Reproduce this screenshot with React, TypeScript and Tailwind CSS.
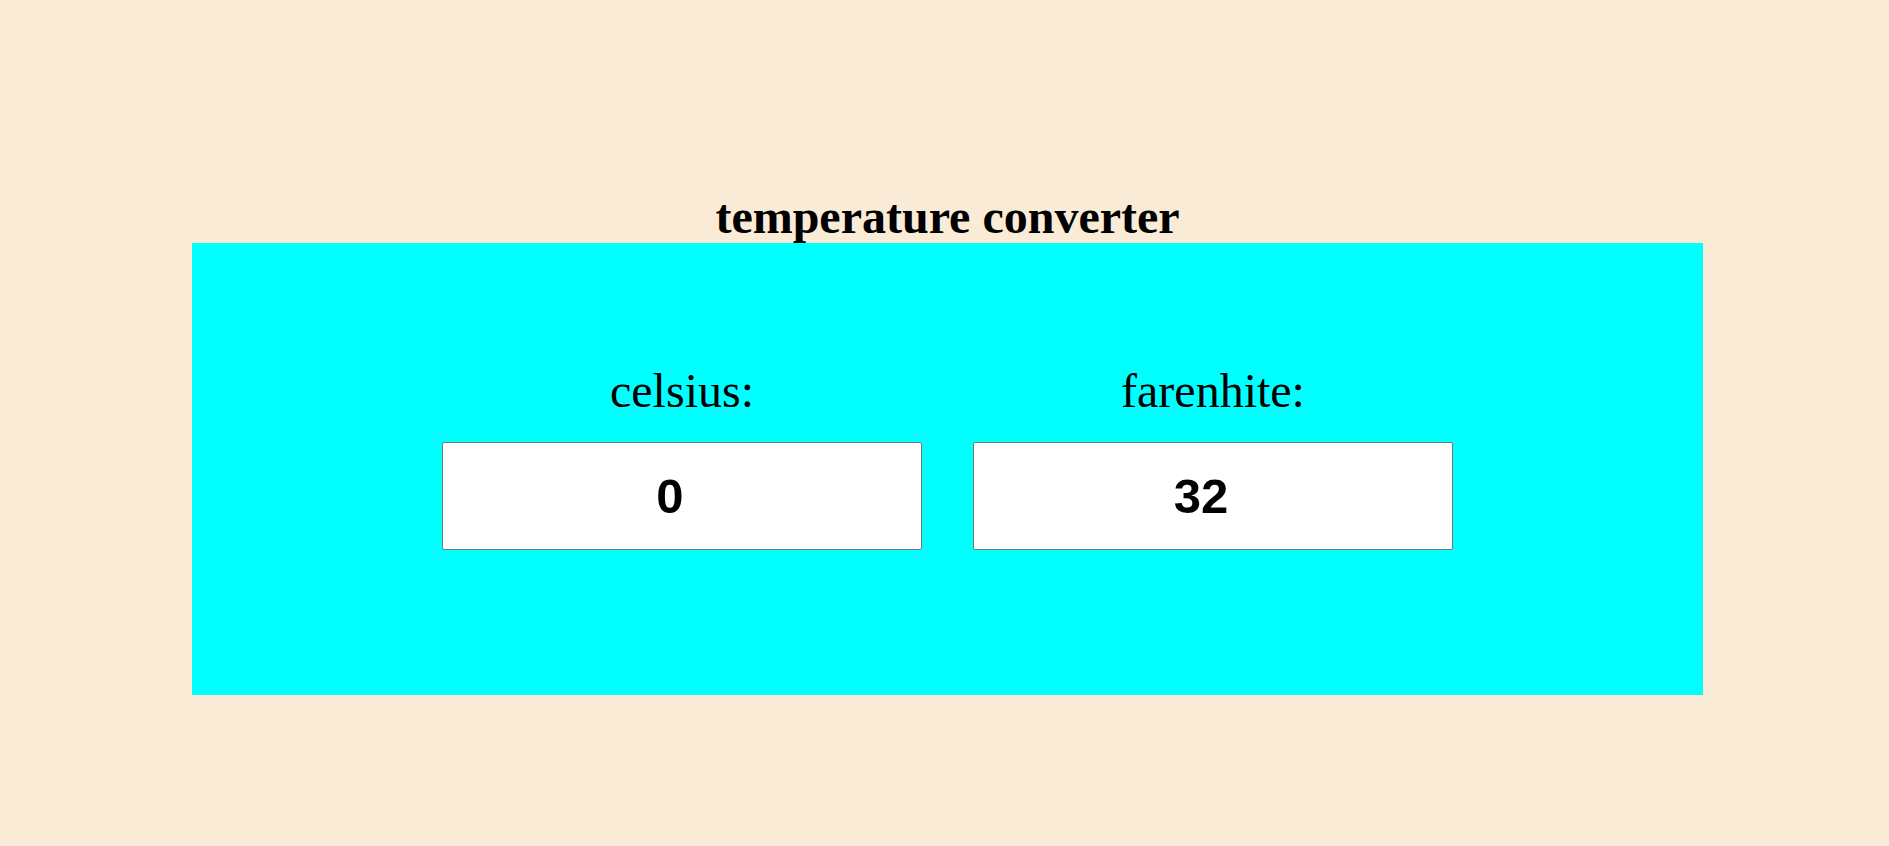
import { useState } from 'react'

export default function App() {
  const [celsius, setCelsius] = useState('0')
  const [farenhite, setFarenhite] = useState('32')

  const onCelsius = (v: string) => {
    setCelsius(v)
    const n = parseFloat(v)
    setFarenhite(isNaN(n) ? '' : String(Math.round((n * 9) / 5 + 32)))
  }

  const onFarenhite = (v: string) => {
    setFarenhite(v)
    const n = parseFloat(v)
    setCelsius(isNaN(n) ? '' : String(Math.round(((n - 32) * 5) / 9)))
  }

  return (
    <div className="min-h-[846px] bg-[#faebd7] pt-[191px] font-['Liberation_Serif',serif] text-black">
      <div className="ml-[192px] w-[1511px]">
        <h1 className="text-center text-[48px] font-bold leading-[52px]">temperature converter</h1>
        <div className="h-[452px] bg-[#00ffff] flex justify-center gap-[51px] pt-[122px]">
          {/* Поле Цельсия */}
          <div className="w-[480px] flex flex-col items-center">
            <label className="text-[48px] leading-[52px]">celsius:</label>
            <input
              value={celsius}
              onChange={(e) => onCelsius(e.target.value)}
              className="mt-[25px] w-[480px] h-[108px] bg-white border border-[#767676] rounded-[2px] text-center pr-[24px] font-['Liberation_Sans',sans-serif] font-bold text-[49px] outline-none"
            />
          </div>

          {/* Поле Фаренгейта */}
          <div className="w-[480px] flex flex-col items-center">
            <label className="text-[48px] leading-[52px]">farenhite:</label>
            <input
              value={farenhite}
              onChange={(e) => onFarenhite(e.target.value)}
              className="mt-[25px] w-[480px] h-[108px] bg-white border border-[#767676] rounded-[2px] text-center pr-[24px] font-['Liberation_Sans',sans-serif] font-bold text-[49px] outline-none"
            />
          </div>
        </div>
      </div>
    </div>
  )
}
